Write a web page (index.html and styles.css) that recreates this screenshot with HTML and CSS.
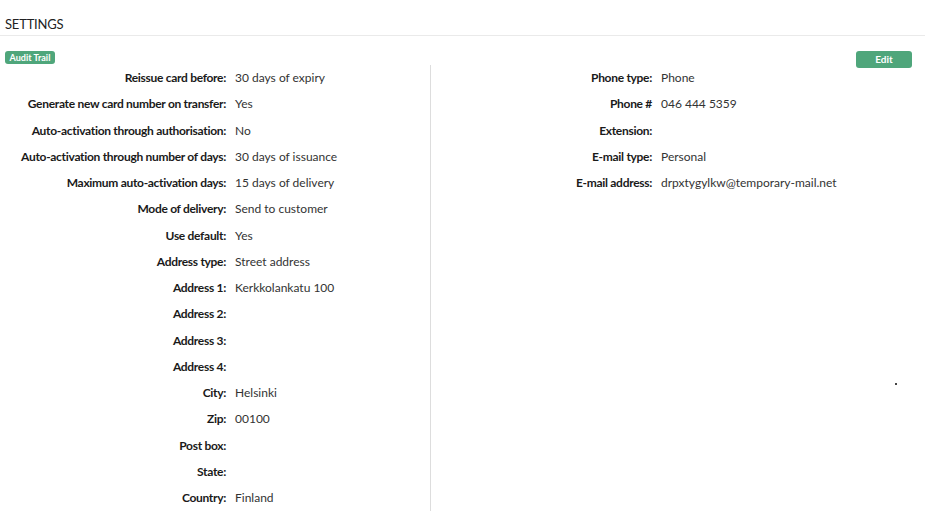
FILE: index.html
```html
<!DOCTYPE html>
<html lang="en">
<head>
    <meta charset="UTF-8">
    <meta name="viewport" content="width=device-width, initial-scale=1.0">
    <title>Settings</title>
    <link rel="stylesheet" href="styles.css">
</head>
<body>
    <div class="page-header">
        <h2>Settings</h2>
    </div>

    <div class="toolbar">
        <button class="btn btn-small">Audit Trail</button>
        <button class="btn btn-edit">Edit</button>
    </div>

    <div class="settings">
        <div class="column column-left">
            <div class="row"><span class="label">Reissue card before:</span><span class="value">30 days of expiry</span></div>
            <div class="row"><span class="label">Generate new card number on transfer:</span><span class="value">Yes</span></div>
            <div class="row"><span class="label">Auto-activation through authorisation:</span><span class="value">No</span></div>
            <div class="row"><span class="label">Auto-activation through number of days:</span><span class="value">30 days of issuance</span></div>
            <div class="row"><span class="label">Maximum auto-activation days:</span><span class="value">15 days of delivery</span></div>
            <div class="row"><span class="label">Mode of delivery:</span><span class="value">Send to customer</span></div>
            <div class="row"><span class="label">Use default:</span><span class="value">Yes</span></div>
            <div class="row"><span class="label">Address type:</span><span class="value">Street address</span></div>
            <div class="row"><span class="label">Address 1:</span><span class="value">Kerkkolankatu 100</span></div>
            <div class="row"><span class="label">Address 2:</span><span class="value"></span></div>
            <div class="row"><span class="label">Address 3:</span><span class="value"></span></div>
            <div class="row"><span class="label">Address 4:</span><span class="value"></span></div>
            <div class="row"><span class="label">City:</span><span class="value">Helsinki</span></div>
            <div class="row"><span class="label">Zip:</span><span class="value">00100</span></div>
            <div class="row"><span class="label">Post box:</span><span class="value"></span></div>
            <div class="row"><span class="label">State:</span><span class="value"></span></div>
            <div class="row"><span class="label">Country:</span><span class="value">Finland</span></div>
        </div>
        <div class="column column-right">
            <div class="row"><span class="label">Phone type:</span><span class="value">Phone</span></div>
            <div class="row"><span class="label">Phone #</span><span class="value">046 444 5359</span></div>
            <div class="row"><span class="label">Extension:</span><span class="value"></span></div>
            <div class="row"><span class="label">E-mail type:</span><span class="value">Personal</span></div>
            <div class="row"><span class="label">E-mail address:</span><span class="value">drpxtygylkw@temporary-mail.net</span></div>
            <span class="stray-dot"></span>
        </div>
    </div>
</body>
</html>
```

FILE: styles.css
```css
body {
    font-family: Lato, "Noto Sans", sans-serif;
    font-size: 12px;
    color: #333;
    margin: 0;
    padding: 0;
    background-color: white;
}

.page-header {
    height: 35px;
    border-bottom: 1px solid #eaeaea;
    padding: 0 5px;
    display: flex;
    align-items: flex-end;
}

.page-header h2 {
    margin: 0 0 3px;
    font-size: 13px;
    font-weight: normal;
    text-transform: uppercase;
    color: #222;
    letter-spacing: -0.2px;
}

.toolbar {
    margin-top: 15px;
    height: 13px;
    padding: 0 13px 0 5px;
    display: flex;
    justify-content: space-between;
    align-items: flex-start;
}

.btn {
    background-color: #4fa67b;
    color: white;
    border: none;
    font-family: inherit;
    font-weight: bold;
    cursor: pointer;
    padding: 0;
}

.btn-small {
    height: 13px;
    width: 50px;
    font-size: 9px;
    border-radius: 3px;
    line-height: 13px;
}

.btn-edit {
    height: 17px;
    width: 56px;
    font-size: 10px;
    border-radius: 3px;
    line-height: 17px;
    position: relative;
    z-index: 1;
}

.settings {
    display: flex;
    padding-top: 1px;
}

.column-left {
    width: 430px;
    border-right: 1px solid #ddd;
}

.column-right {
    flex: 1;
    position: relative;
}

.row {
    display: flex;
    line-height: 26.25px;
    height: 26.25px;
}

.label {
    font-weight: bold;
    color: #1a1a1a;
    text-align: right;
    white-space: nowrap;
    letter-spacing: -0.3px;
    flex-shrink: 0;
}

.column-left .label {
    width: 226px;
}

.column-right .label {
    width: 221px;
}

.value {
    margin-left: 9px;
    white-space: nowrap;
}

.stray-dot {
    position: absolute;
    left: 464px;
    top: 318px;
    width: 2px;
    height: 2px;
    background-color: #444;
}
```
